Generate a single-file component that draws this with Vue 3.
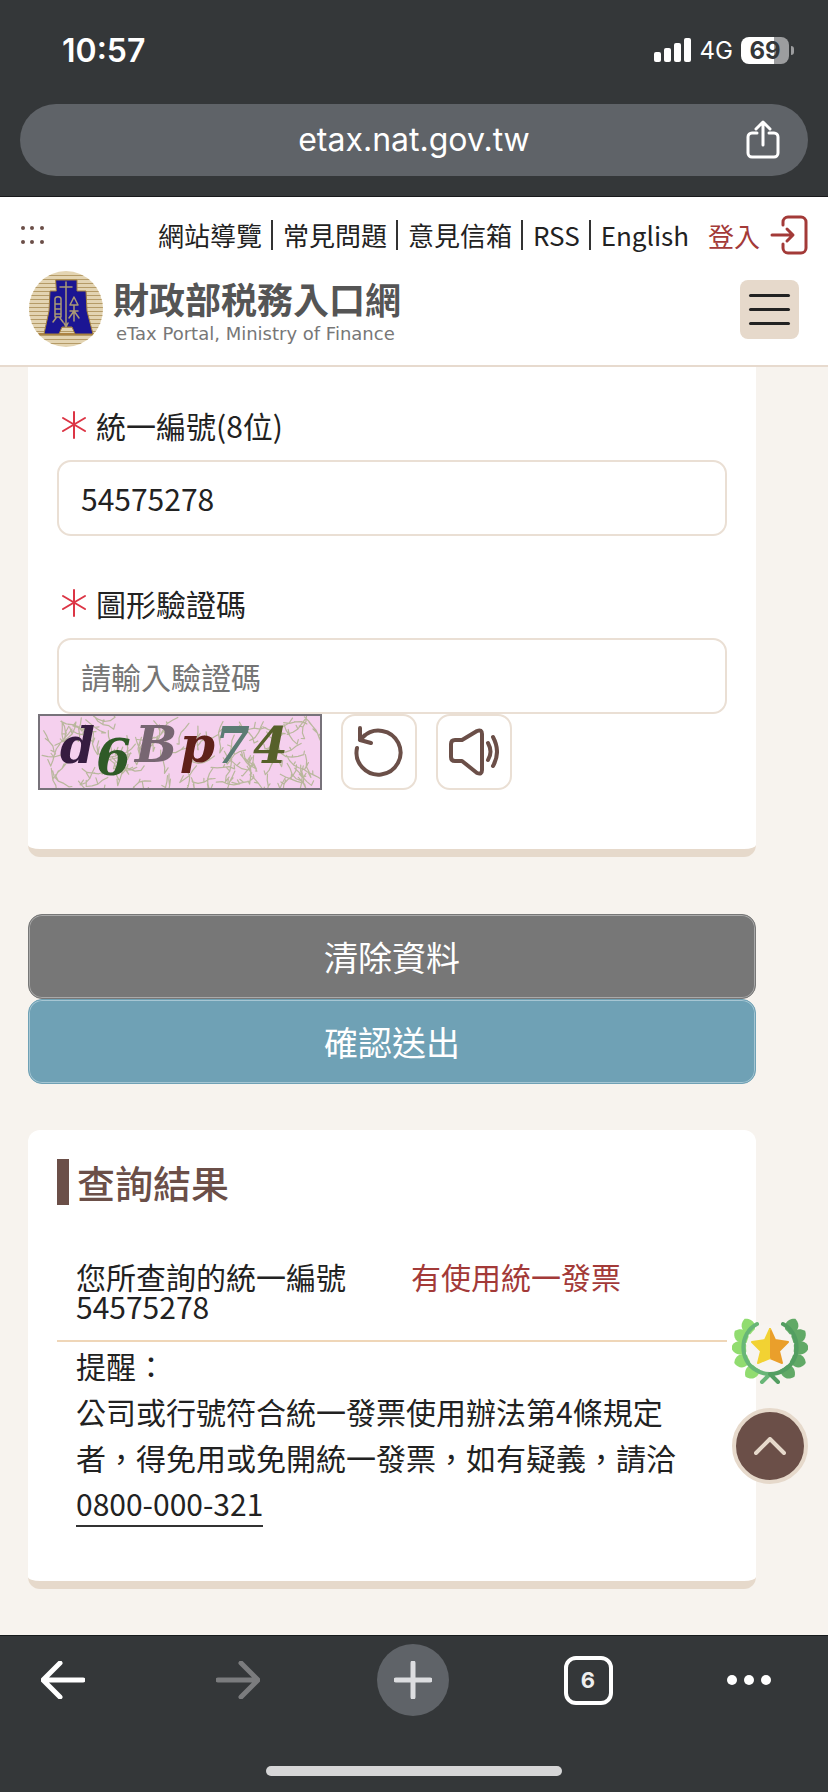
<script setup>
import { ref } from "vue";

const taxId = ref("54575278");
const captcha = ref("");

const navLinks = ["網站導覽", "常見問題", "意見信箱", "RSS", "English"];

const glyphs = [
  { char: "d", x: 22, y: 49, fill: "#361c40" },
  { char: "6", x: 58, y: 61, fill: "#2f5a27" },
  { char: "B", x: 97, y: 48, fill: "#776672" },
  { char: "p", x: 142, y: 48, fill: "#5f2019" },
  { char: "7", x: 177, y: 49, fill: "#5b7b73" },
  { char: "4", x: 215, y: 49, fill: "#56602a" },
];

// seeded so that the noise stays the same on each render
let seed = 7;
function random() {
  seed = (seed * 16807) % 2147483647;
  return seed / 2147483647;
}

function makeTwig() {
  let x = random() * 280;
  let y = random() * 74;
  let angle = random() * 1.6 + (random() > 0.5 ? 0.2 : 1.4);
  let d = `M${x.toFixed(1)} ${y.toFixed(1)}`;
  for (let i = 0; i < 4; i++) {
    angle += (random() - 0.5) * 1.1;
    x += Math.cos(angle) * 6;
    y += Math.sin(angle) * 6;
    d += `L${x.toFixed(1)} ${y.toFixed(1)}`;
    if (i % 2) {
      d += `l${(random() * 8 - 4).toFixed(1)} ${(-random() * 7).toFixed(1)}M${x.toFixed(1)} ${y.toFixed(1)}`;
    }
  }
  return d;
}
const twigs = Array.from({ length: 110 }, makeTwig).join("");

const logoStripes = Array.from({ length: 18 }, (_, i) => 4 + i * 4);

const leaves = [
  { x: 16, y: 8, angle: 65 },
  { x: 9, y: 18, angle: 40 },
  { x: 7, y: 30, angle: 8 },
  { x: 10, y: 43, angle: -14 },
  { x: 20, y: 54, angle: -34 },
];

function clearForm() {
  taxId.value = "";
  captcha.value = "";
}
</script>

<template>
  <div class="phone">
    <div class="browser-top">
      <div class="status">
        <span class="time">10:57</span>
        <div class="status-right">
          <svg class="signal" viewBox="0 0 38 24" aria-hidden="true">
            <rect x="0" y="14" width="7" height="10" rx="2" />
            <rect x="10" y="10" width="7" height="14" rx="2" />
            <rect x="20" y="5" width="7" height="19" rx="2" />
            <rect x="30" y="0" width="7" height="24" rx="2" />
          </svg>
          <span class="network">4G</span>
          <span class="battery">69</span>
        </div>
      </div>
      <div class="address">
        <span class="url">etax.nat.gov.tw</span>
        <button type="button" class="share" aria-label="分享">
          <svg viewBox="0 0 34 40" aria-hidden="true">
            <path d="M11 13H6a4 4 0 0 0-4 4v16a4 4 0 0 0 4 4h22a4 4 0 0 0 4-4V17a4 4 0 0 0-4-4h-5M17 25V3M10 9l7-7 7 7" />
          </svg>
        </button>
      </div>
    </div>

    <header class="site-header">
      <div class="top-row">
        <a href="#top" class="access-key" aria-label="上方導覽區">
          <svg viewBox="0 0 24 20" aria-hidden="true">
            <circle v-for="x in [3, 12, 22]" :key="x" :cx="x" cy="3" r="2" />
            <circle v-for="x in [3, 12, 22]" :key="x" :cx="x" cy="17" r="2" />
          </svg>
        </a>
        <nav class="links">
          <a v-for="link in navLinks" :key="link" href="#">{{ link }}</a>
        </nav>
        <a href="#login" class="login">
          登入
          <svg viewBox="0 0 38 40" aria-hidden="true">
            <path d="M13 10V7a5 5 0 0 1 5-5h13a5 5 0 0 1 5 5v26a5 5 0 0 1-5 5H18a5 5 0 0 1-5-5v-4M2 20h20M17 14l6 6-6 6" />
          </svg>
        </a>
      </div>
      <div class="brand-row">
        <a href="#" class="brand">
          <svg class="emblem" viewBox="0 0 74 76" aria-hidden="true">
            <defs>
              <clipPath id="emblem-clip"><ellipse cx="37" cy="38" rx="37" ry="38" /></clipPath>
            </defs>
            <g clip-path="url(#emblem-clip)">
              <rect width="74" height="76" fill="#e3d4b2" />
              <rect v-for="y in logoStripes" :key="y" x="0" :y="y" width="74" height="1" fill="#b59b67" />
              <path d="M10 63h54" stroke="#ad8444" stroke-width="2" />
            </g>
            <path
              d="M27 9h21v11h9l1 20 6 23H46l-3-7H33l-3 7H15l5-23 1-20h6z"
              fill="#1b1593"
              stroke="#a5823f"
              stroke-width="1"
            />
            <path
              d="M37 11v44M31 16h12M35 52l2 4 2-4M26 28c0-3 6-3 6 0v18h-6zM26 33h6M26 38h6M26 43h6M27 47l-3 4M31 47l3 4M45 26l-4 8h8zM45 34v16M41 40h8M45 40l-5 7M45 40l5 7"
              fill="none"
              stroke="#aa9a76"
              stroke-width="1.5"
            />
          </svg>
          <span class="brand-text">
            <strong>財政部税務入口網</strong>
            <small>eTax Portal, Ministry of Finance</small>
          </span>
        </a>
        <button type="button" class="menu" aria-label="選單">
          <span></span>
          <span></span>
          <span></span>
        </button>
      </div>
    </header>

    <main>
      <form @submit.prevent>
        <section class="card form-card">
          <div class="field">
            <label for="tax-id">
              <svg class="required" viewBox="0 0 24 28" aria-hidden="true">
                <path d="M12 1v26M1 7l22 13M23 7L1 20" />
              </svg>
              統一編號(8位)
            </label>
            <input id="tax-id" v-model="taxId" type="text" inputmode="numeric" />
          </div>
          <div class="field">
            <label for="captcha">
              <svg class="required" viewBox="0 0 24 28" aria-hidden="true">
                <path d="M12 1v26M1 7l22 13M23 7L1 20" />
              </svg>
              圖形驗證碼
            </label>
            <input id="captcha" v-model="captcha" type="text" placeholder="請輸入驗證碼" />
          </div>
          <div class="captcha-row">
            <svg class="captcha" viewBox="0 0 284 76" role="img" aria-label="圖形驗證碼">
              <defs>
                <clipPath id="captcha-clip"><rect width="284" height="76" /></clipPath>
              </defs>
              <rect x="1" y="1" width="282" height="74" fill="#f5d0ee" />
              <path :d="twigs" clip-path="url(#captcha-clip)" fill="none" stroke="#b9b79d" stroke-width="1.2" />
              <text v-for="g in glyphs" :key="g.char" :x="g.x" :y="g.y" :fill="g.fill">{{ g.char }}</text>
              <rect x="1" y="1" width="282" height="74" fill="none" stroke="#77727a" stroke-width="2" />
            </svg>
            <button type="button" class="tool" aria-label="重新產生驗證碼">
              <svg viewBox="0 0 50 52" aria-hidden="true">
                <path d="M3 22A22 22 0 1 0 9 11M6 2v12l11 3M6 14l5-5" />
              </svg>
            </button>
            <button type="button" class="tool" aria-label="播放驗證碼">
              <svg viewBox="0 0 50 52" aria-hidden="true">
                <path d="M2 18q0-4 4-4h7L28 5q5-2 5 3v36q0 5-5 3L13 35H6q-4 0-4-4zM39 17q5 9 0 17M44 11q8 15 0 29" />
              </svg>
            </button>
          </div>
        </section>
        <div class="actions">
          <button type="button" class="action clear" @click="clearForm">清除資料</button>
          <button type="submit" class="action send">確認送出</button>
        </div>
      </form>

      <section class="card result-card">
        <h2>查詢結果</h2>
        <div class="result">
          <span>您所查詢的統一編號54575278</span>
          <strong>有使用統一發票</strong>
        </div>
        <div class="note">
          <p>提醒：</p>
          <p>公司或行號符合統一發票使用辦法第4條規定者，得免用或免開統一發票，如有疑義，請洽<a href="tel:0800000321">0800-000-321</a></p>
        </div>
      </section>

      <div class="floating">
        <a href="#award" class="award" aria-label="網站獎章">
          <svg viewBox="0 0 76 66" aria-hidden="true">
            <g fill="#91dc70">
              <path
                v-for="leaf in leaves"
                :key="leaf.y"
                d="M-8 0C-5-8 4-10 10 0C4 9-5 8-8 0z"
                :transform="`translate(${leaf.x} ${leaf.y}) rotate(${leaf.angle})`"
              />
            </g>
            <g fill="#61a966" transform="translate(76 0) scale(-1 1)">
              <path
                v-for="leaf in leaves"
                :key="leaf.y"
                d="M-8 0C-5-8 4-10 10 0C4 9-5 8-8 0z"
                :transform="`translate(${leaf.x} ${leaf.y}) rotate(${leaf.angle})`"
              />
            </g>
            <circle cx="38" cy="30" r="24" fill="#f7f4f0" />
            <path d="M25 6C7 15 7 43 24 52q6 4 14 4l-8 8" fill="none" stroke="#68b677" stroke-width="4" stroke-linecap="round" />
            <path d="M51 6c18 9 18 37 1 46q-6 4-14 4l8 8" fill="none" stroke="#539e61" stroke-width="4" stroke-linecap="round" />
            <path d="M38 11l5 11 13 2-9 9 3 12-12-5z" fill="#ea9f2b" stroke="#ea9f2b" stroke-width="2" stroke-linejoin="round" />
            <path d="M38 11v29l-12 5 3-12-9-9 13-2z" fill="#f2d233" stroke="#f2d233" stroke-width="2" stroke-linejoin="round" />
            <path d="M38 11l5 11 12 2-8 9 3 12-12-5z" fill="#ea9f2b" />
          </svg>
        </a>
        <a href="#top" class="to-top" aria-label="回到頂端">
          <svg viewBox="0 0 32 18" aria-hidden="true"><path d="M2 16L16 2l14 14" /></svg>
        </a>
      </div>
    </main>

    <footer class="browser-bottom">
      <div class="toolbar">
        <button type="button" aria-label="上一頁">
          <svg class="arrow" viewBox="0 0 44 38" aria-hidden="true"><path d="M42 19H3M19 2L2 19l17 17" /></svg>
        </button>
        <button type="button" class="disabled" aria-label="下一頁" disabled>
          <svg class="arrow" viewBox="0 0 44 38" aria-hidden="true"><path d="M2 19h39M25 2l17 17-17 17" /></svg>
        </button>
        <button type="button" class="new-tab" aria-label="新分頁">
          <svg class="plus" viewBox="0 0 38 38" aria-hidden="true"><path d="M19 2v34M2 19h34" /></svg>
        </button>
        <button type="button" aria-label="分頁"><span class="tabs">6</span></button>
        <button type="button" class="more" aria-label="更多">
          <svg viewBox="0 0 44 10" aria-hidden="true">
            <circle v-for="x in [5, 22, 39]" :key="x" :cx="x" cy="5" r="5" />
          </svg>
        </button>
      </div>
      <div class="home-bar"></div>
    </footer>
  </div>
</template>

<style>
body {
  margin: 0;
}
</style>

<style scoped>
.phone {
  display: flex;
  flex-direction: column;
  min-height: 100vh;
  background: #f7f3ee;
  color: #222;
  font-family: "Noto Sans CJK TC", sans-serif;
  font-size: 30px;
}

.phone * {
  box-sizing: border-box;
}

button {
  padding: 0;
  border: 0;
  background: none;
  font-family: inherit;
  cursor: pointer;
}

a {
  color: inherit;
  text-decoration: none;
}

svg {
  display: block;
}

svg path {
  stroke-linecap: round;
  stroke-linejoin: round;
}

.browser-top {
  padding: 0 20px 20px;
  border-bottom: 1px solid #18191b;
  background: #343739;
  color: #fff;
  font-family: Inter, sans-serif;
}

.status {
  display: flex;
  align-items: center;
  justify-content: space-between;
  height: 104px;
  padding: 0 14px 4px 42px;
}

.time {
  font-size: 32px;
  font-weight: 600;
}

.status-right {
  display: flex;
  align-items: center;
  gap: 8px;
}

.signal {
  width: 38px;
  height: 24px;
  fill: #fff;
}

.network {
  font-size: 24px;
}

.battery {
  position: relative;
  width: 48px;
  margin-right: 5px;
  border-radius: 8px;
  background: linear-gradient(90deg, #fff 69%, #9c9d9f 69%);
  color: #343739;
  font-size: 24px;
  font-weight: 700;
  line-height: 27px;
  text-align: center;
}

.battery::after {
  content: "";
  position: absolute;
  top: 9px;
  right: -5px;
  width: 3px;
  height: 9px;
  border-radius: 0 3px 3px 0;
  background: #9c9d9f;
}

.address {
  display: grid;
  grid-template-columns: 1fr auto 1fr;
  align-items: center;
  height: 72px;
  padding: 0 28px;
  border-radius: 36px;
  background: #5f6368;
}

.url {
  grid-column: 2;
  font-size: 32px;
  line-height: 40px;
}

.share {
  justify-self: end;
}

.share svg {
  width: 34px;
  height: 40px;
  fill: none;
  stroke: #fff;
  stroke-width: 3;
}

.site-header {
  padding: 16px 20px 18px;
  border-bottom: 2px solid #e7dace;
  background: #fff;
}

.top-row,
.links,
.login,
.brand-row,
.brand {
  display: flex;
  align-items: center;
}

.top-row {
  height: 44px;
  font-size: 26px;
}

.access-key {
  margin-right: auto;
}

.access-key svg {
  width: 24px;
  height: 20px;
  fill: #6b4f48;
}

.links a {
  padding: 0 9px 0 10px;
  line-height: 30px;
}

.links a + a {
  border-left: 2px solid #333;
}

.login {
  gap: 10px;
  margin-left: 10px;
  color: #a33a38;
}

.login svg {
  width: 38px;
  height: 40px;
  fill: none;
  stroke: currentColor;
  stroke-width: 3;
}

.brand-row {
  justify-content: space-between;
  margin-top: 14px;
  padding: 0 9px;
}

.brand {
  gap: 10px;
}

.emblem {
  width: 74px;
  height: 76px;
}

.brand-text {
  display: flex;
  flex-direction: column;
  padding-top: 4px;
}

.brand-text strong {
  color: #555;
  font-size: 36px;
  font-weight: 700;
  line-height: 46px;
}

.brand-text small {
  padding-left: 3px;
  color: #777;
  font-family: "DejaVu Sans", sans-serif;
  font-size: 18px;
  line-height: 26px;
}

.menu {
  display: flex;
  flex-direction: column;
  align-items: center;
  justify-content: center;
  gap: 11px;
  width: 59px;
  height: 59px;
  border-radius: 8px;
  background: #e6d9cb;
}

.menu span {
  width: 41px;
  height: 3px;
  border-radius: 2px;
  background: #222;
}

main {
  position: relative;
  flex: 1;
  padding: 0 72px 40px 28px;
}

.card {
  padding: 0 29px;
  border-bottom: 8px solid #e6d9cb;
  border-radius: 12px;
  background: #fff;
}

.form-card {
  padding-top: 36px;
  padding-bottom: 59px;
  border-top-left-radius: 0;
  border-top-right-radius: 0;
}

.field + .field {
  margin-top: 45px;
}

label {
  display: flex;
  align-items: center;
  gap: 10px;
  margin-bottom: 13px;
  padding-left: 5px;
  line-height: 44px;
}

.required {
  width: 24px;
  height: 28px;
  fill: none;
  stroke: #dc3545;
  stroke-width: 2;
}

input {
  display: block;
  width: 100%;
  height: 76px;
  padding: 0 22px;
  border: 2px solid #eadfd4;
  border-radius: 14px;
  background: #fff;
  color: #222;
  font-family: inherit;
  font-size: 30px;
}

input::placeholder {
  color: #757575;
}

.captcha-row {
  display: flex;
  gap: 19px;
  margin-left: -19px;
}

.captcha {
  width: 284px;
  height: 76px;
  overflow: visible;
}

.captcha text {
  font-family: "DejaVu Serif", serif;
  font-size: 50px;
  font-style: italic;
  font-weight: 700;
}

.tool {
  display: grid;
  place-items: center;
  width: 76px;
  height: 76px;
  border: 2px solid #eadfd4;
  border-radius: 14px;
}

.tool svg {
  width: 50px;
  height: 52px;
  fill: none;
  stroke: #6b4f48;
  stroke-width: 4;
}

.actions {
  display: flex;
  flex-direction: column;
  margin: 57px 0 46px;
}

.action {
  height: 85px;
  border: 1px solid;
  border-radius: 14px;
  color: #fff;
  font-size: 34px;
}

.clear {
  border-color: #777;
  background: #777;
  box-shadow: inset 0 0 0 1px #a9a9a9;
}

.send {
  border-color: #6fa1b5;
  background: #6fa1b5;
  box-shadow: inset 0 0 0 1px #a6c6d3;
}

.result-card {
  padding-top: 29px;
  padding-bottom: 54px;
}

h2 {
  margin: 0 0 56px;
  padding-left: 8px;
  border-left: 12px solid #6b4f48;
  color: #6b4f48;
  font-size: 38px;
  font-weight: 500;
  line-height: 46px;
}

.result {
  display: grid;
  grid-template-columns: 1fr 1fr;
  border-bottom: 2px solid #efd6b8;
  line-height: 30px;
}

.result span,
.result strong {
  padding: 0 19px 19px;
  font-weight: 400;
}

.result strong {
  color: #a33a38;
}

.note {
  padding: 0 38px 0 19px;
  line-height: 46px;
}

.note p {
  margin: 0;
}

.note a {
  display: inline-block;
  border-bottom: 2px solid #333;
  line-height: 44px;
}

.floating {
  position: absolute;
  right: 20px;
  bottom: 151px;
  display: flex;
  flex-direction: column;
  gap: 24px;
}

.award svg {
  width: 76px;
  height: 66px;
}

.to-top {
  display: grid;
  place-items: center;
  width: 76px;
  height: 76px;
  border: 4px solid #e6d9cb;
  border-radius: 50%;
  background: #6b4f48;
}

.to-top svg {
  width: 32px;
  height: 18px;
  fill: none;
  stroke: #e6d9cb;
  stroke-width: 4;
}

.browser-bottom {
  padding: 8px 0 16px;
  border-top: 1px solid #161a1b;
  background: #343739;
}

.toolbar {
  display: flex;
  align-items: center;
  justify-content: space-between;
  padding: 0 57px 0 27px;
}

.toolbar button {
  display: grid;
  place-items: center;
  width: 72px;
  height: 72px;
  border-radius: 50%;
}

.toolbar .more {
  width: 44px;
}

.toolbar .new-tab {
  background: #5f6368;
}

.arrow,
.plus {
  fill: none;
  stroke: #fff;
  stroke-width: 5;
}

.arrow {
  width: 44px;
  height: 38px;
}

.plus {
  width: 38px;
  height: 38px;
  stroke: #dcdde0;
}

.disabled .arrow {
  stroke: #7b7c7e;
}

.tabs {
  width: 49px;
  border: 4px solid #fff;
  border-radius: 12px;
  color: #eee;
  font-family: Inter, sans-serif;
  font-size: 22px;
  font-weight: 700;
  line-height: 41px;
}

.more svg {
  width: 44px;
  height: 10px;
  fill: #fff;
}

.home-bar {
  width: 296px;
  height: 10px;
  margin: 50px auto 0;
  border-radius: 5px;
  background: #d6d6d7;
}
</style>
